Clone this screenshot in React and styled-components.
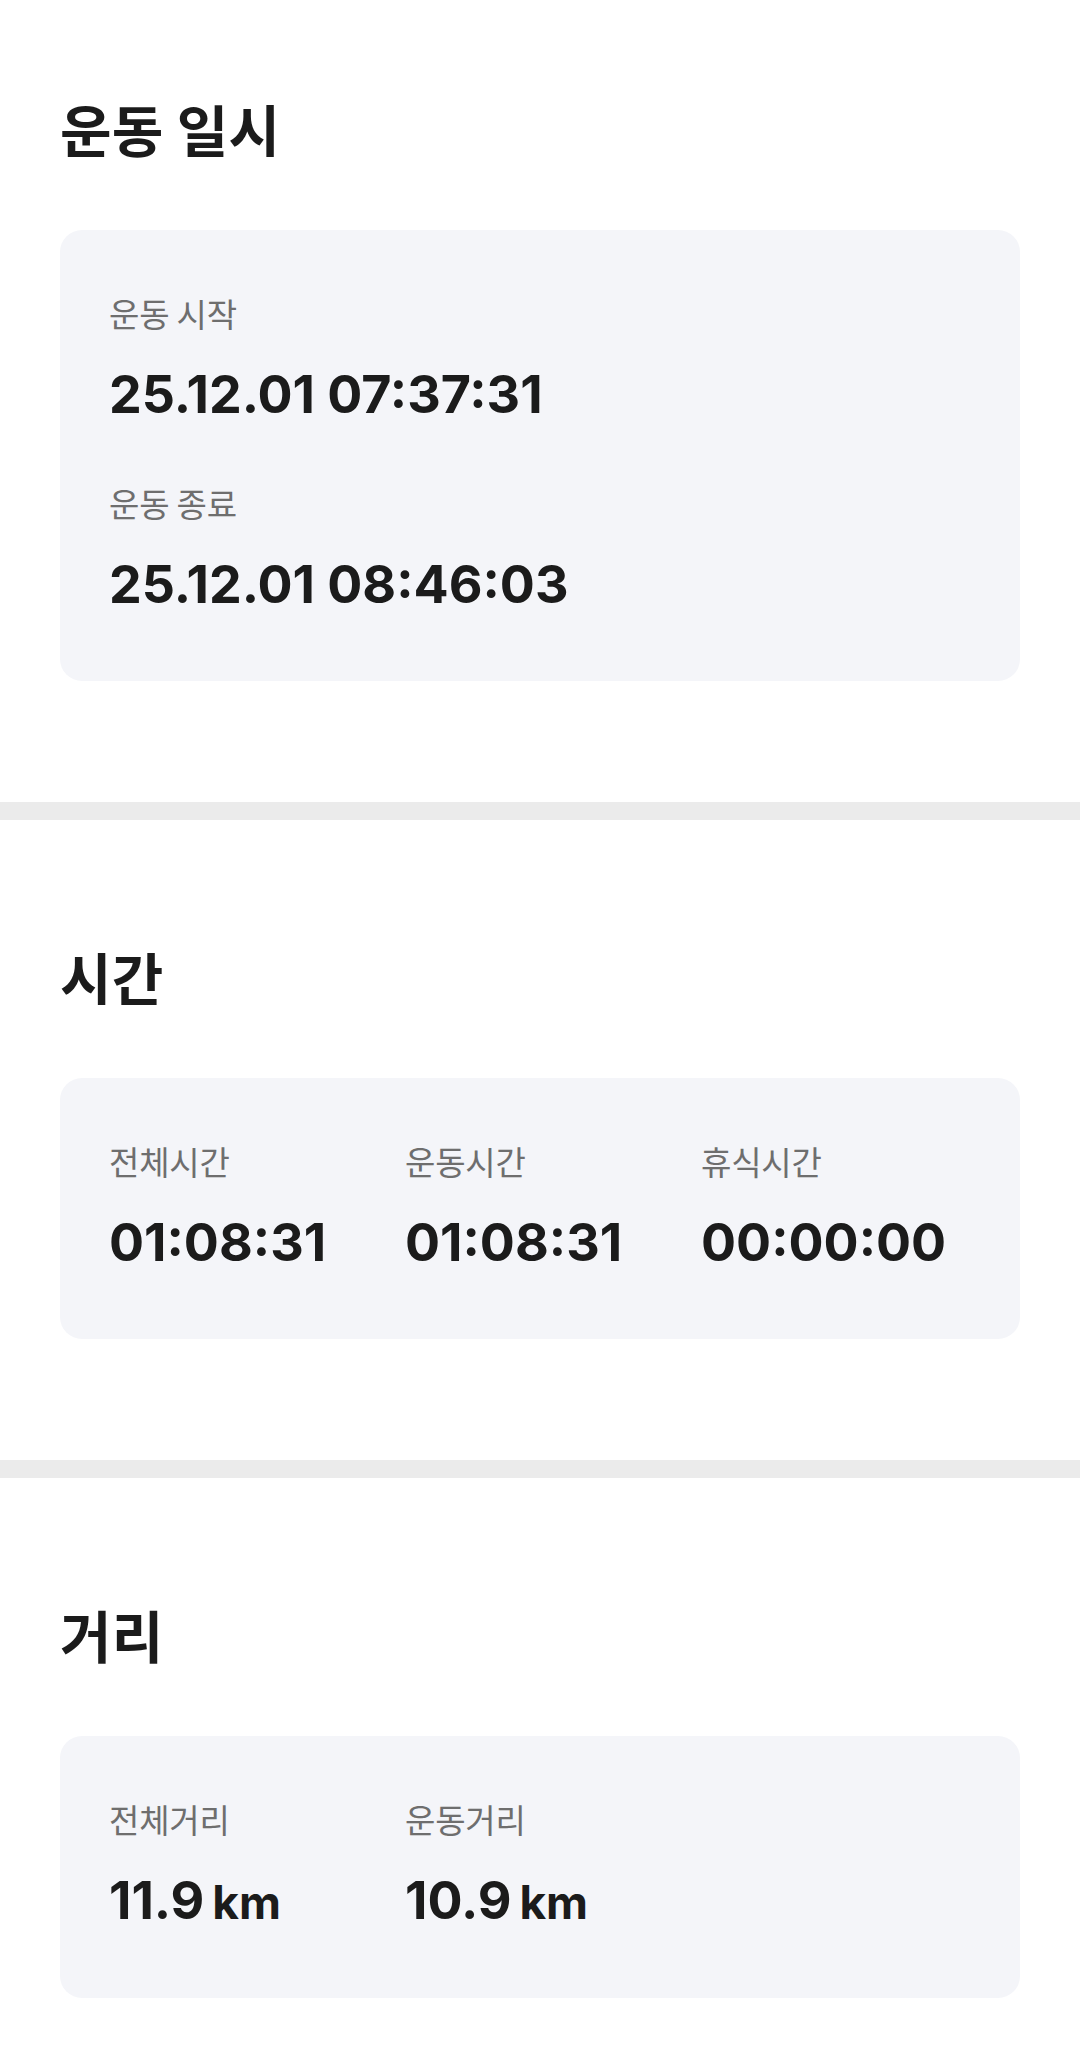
import React from "react";
import styled, { createGlobalStyle } from "styled-components";

const Global = createGlobalStyle`
  html, body { margin: 0; padding: 0; background: #ffffff; }
  body { font-family: "Inter", "Noto Sans CJK KR", sans-serif; -webkit-font-smoothing: antialiased; }
  * { box-sizing: border-box; }
`;

const Page = styled.main`
  width: 1080px;
  min-height: 2060px;
  background: #ffffff;
  display: flex;
  flex-direction: column;
`;

const Section = styled.section`
  padding: ${(p) => (p.$first ? "96px" : "124px")} 60px ${(p) => (p.$last ? "60px" : "121px")};
  display: flex;
  flex-direction: column;
`;

const Divider = styled.div`
  height: 18px;
  background: #ebebeb;
`;

const Title = styled.h2`
  margin: 0 0 70px;
  font-family: "Noto Sans CJK KR", sans-serif;
  font-weight: 700;
  font-size: 56px;
  line-height: 64px;
  color: #1b1b1b;
  letter-spacing: 0.3px;
`;

const Card = styled.div`
  background: #f4f5f9;
  border-radius: 22px;
  padding: 63px 48px 66px 49px;
  display: ${(p) => (p.$grid ? "grid" : "flex")};
  flex-direction: column;
  grid-template-columns: repeat(3, 296px);
  gap: ${(p) => (p.$grid ? "0" : "58px")};
`;

const Item = styled.div`
  display: flex;
  flex-direction: column;
  gap: 32px;
`;

const Label = styled.div`
  font-family: "Noto Sans CJK KR", sans-serif;
  font-weight: 400;
  font-size: 33px;
  line-height: 40px;
  color: #6e6e6e;
  letter-spacing: -0.2px;
`;

const Value = styled.div`
  font-family: "Inter", "Noto Sans CJK KR", sans-serif;
  font-weight: 700;
  font-size: 52px;
  line-height: 60px;
  color: #1b1b1b;
  letter-spacing: 0;
  white-space: nowrap;
`;

const Unit = styled.span`
  font-size: 46px;
  margin-left: 8px;
`;

export default function App() {
  return (
    <>
      <Global />
      <Page>
        <Section $first>
          <Title>운동 일시</Title>
          <Card>
            <Item>
              <Label>운동 시작</Label>
              <Value>25.12.01 07:37:31</Value>
            </Item>
            <Item>
              <Label>운동 종료</Label>
              <Value>25.12.01 08:46:03</Value>
            </Item>
          </Card>
        </Section>
        <Divider />
        <Section>
          <Title>시간</Title>
          <Card $grid>
            <Item>
              <Label>전체시간</Label>
              <Value>01:08:31</Value>
            </Item>
            <Item>
              <Label>운동시간</Label>
              <Value>01:08:31</Value>
            </Item>
            <Item>
              <Label>휴식시간</Label>
              <Value>00:00:00</Value>
            </Item>
          </Card>
        </Section>
        <Divider />
        <Section $last>
          <Title>거리</Title>
          <Card $grid>
            <Item>
              <Label>전체거리</Label>
              <Value>
                11.9<Unit>km</Unit>
              </Value>
            </Item>
            <Item>
              <Label>운동거리</Label>
              <Value>
                10.9<Unit>km</Unit>
              </Value>
            </Item>
          </Card>
        </Section>
      </Page>
    </>
  );
}
